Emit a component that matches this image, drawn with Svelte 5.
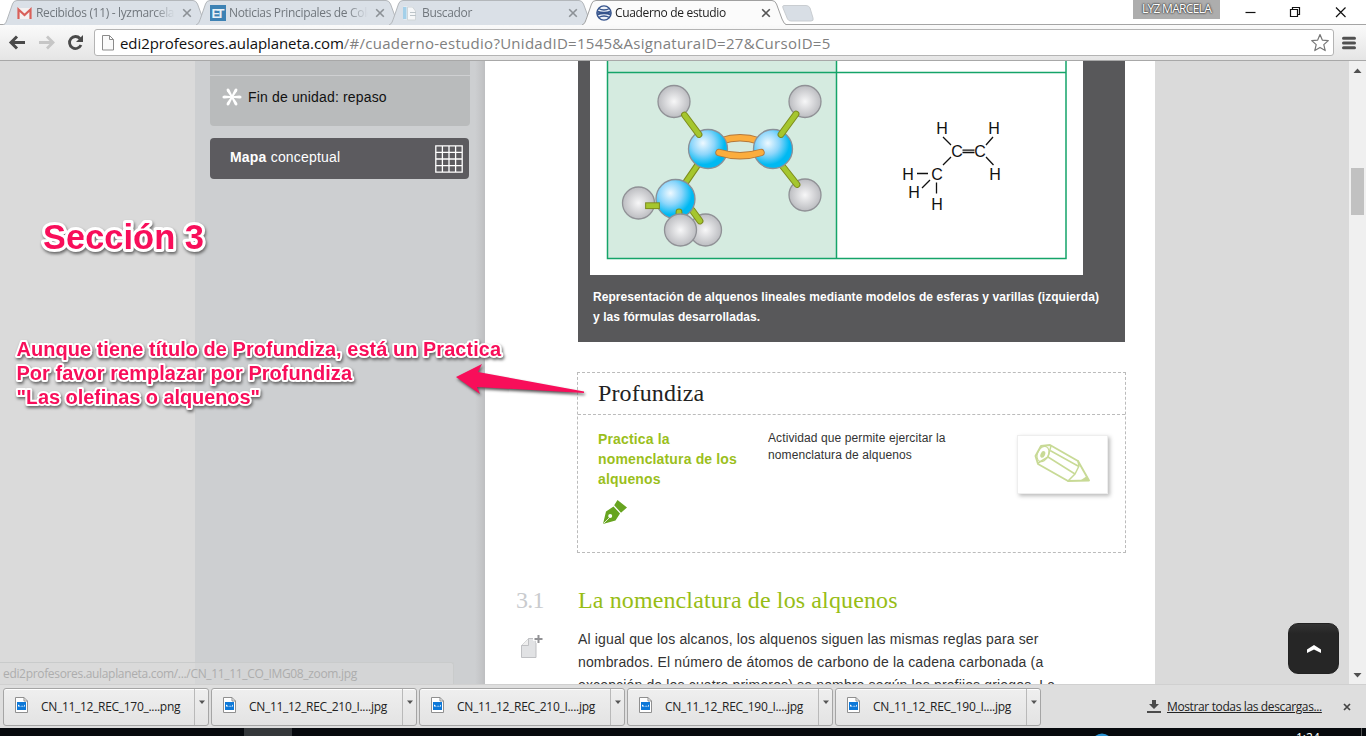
<script>
  const tabs = [
    { title: 'Recibidos (11) - lyzmarcela', icon: 'mail', active: false },
    { title: 'Noticias Principales de Colombia', icon: 'et', active: false },
    { title: 'Buscador', icon: 'docs', active: false },
    { title: 'Cuaderno de estudio', icon: 'globe', active: true }
  ];
  const downloads = [
    'CN_11_12_REC_170_....png',
    'CN_11_12_REC_210_I....jpg',
    'CN_11_12_REC_210_I....jpg',
    'CN_11_12_REC_190_I....jpg',
    'CN_11_12_REC_190_I....jpg'
  ];
  const formula = [
    ['H', 942, 133.5], ['H', 994, 133.5], ['C', 957, 156.5], ['C', 980, 156.5], ['H', 995, 179.5],
    ['C', 937, 179.5], ['H', 908, 179.5], ['H', 914, 198], ['H', 937, 209.5]
  ];
</script>

<div class="window">
  <header class="tabstrip">
    <div class="tabs">
      {#each tabs as tab}
        <div class="tab" class:active={tab.active}>
          <svg class="shape" width="206" height="25" viewBox="0 0 206 25">
            <path d="M0 25 C3 24 3.500 21 5 17 L9.500 4 Q10.500 .5 14 .5 H190 Q193 .5 194.500 4 L200 19 Q202 24.500 205 25" />
          </svg>
          <span class="favicon">
            {#if tab.icon === 'mail'}
              <svg width="16" height="16" viewBox="0 0 16 16"><rect x="1" y="3" width="13" height="11" fill="#f4f1f1" /><path d="M1.500 14V4.500L7.500 10l6-5.500V14" fill="none" stroke="#d9605a" stroke-width="2.200" /></svg>
            {:else if tab.icon === 'et'}
              <svg width="16" height="16" viewBox="0 0 16 16"><rect width="16" height="16" fill="#3d82b4" /><text x="1.500" y="13" font-size="13" textLength="13" font-family="Liberation Sans" font-weight="bold" fill="#e8f1f7">ET</text></svg>
            {:else if tab.icon === 'docs'}
              <svg width="16" height="16" viewBox="0 0 16 16"><path d="M.5 1.500h9v13h-9z" fill="#eef4f8" /><path d="M0 2h3.500v12H0z" fill="#a4d0e9" /><path d="M4.500 2h5l3 4v9h-8z" fill="#f6f7f8" stroke="#d0d5d8" /><path d="M7 7.500h6M7 10.500h6" stroke="#bcc4c9" /></svg>
            {:else}
              <svg width="16" height="16" viewBox="0 0 16 16" fill="none" stroke="#35538c" stroke-width="1.300"><circle cx="8" cy="8" r="7.100" fill="#eef2f8" /><path d="M2.500 3.500q5.500 3 11 0M1 6q7 3 14 0M.8 8h14.400M1 10q7-3 14 0M2.500 12.500q5.500-3 11 0" /></svg>
            {/if}
          </span>
          <span class="title">{tab.title}</span>
          <svg class="close" width="10" height="10" viewBox="0 0 10 10"><path d="M1.200 1.200l7.600 7.600M8.800 1.200l-7.600 7.600" /></svg>
        </div>
      {/each}
      <svg class="newtab" width="34" height="18" viewBox="0 0 34 18"><path d="M3 .5H25Q28 .5 29 3L32 13Q33 16 30 16H10Q7.500 16 6.500 14L2 3Q1 .5 3 .5Z" fill="#d8dee5" stroke="#c9cdd1" /></svg>
    </div>
    <div class="controls">
      <span class="user">LYZ MARCELA</span>
      <svg width="110" height="24" viewBox="0 0 110 24" fill="none" stroke="#111" stroke-width="1.200">
        <path d="M.5 12.500h10" /><path d="M45.500 9.500h7v7h-7zM47.500 9.500v-2h7v7h-2" /><path d="M91 7.500l9.500 9.500M100.500 7.500l-9.500 9.500" />
      </svg>
    </div>
  </header>

  <nav class="toolbar">
    <svg class="nav" width="94" height="36" viewBox="0 25 94 36" fill="none">
      <path d="M25 42.500H11.500M17 36.500l-6 6 6 6" stroke="#4a4a4a" stroke-width="3" />
      <path d="M39 42.500h13M47 36.500l6 6-6 6" stroke="#c6c6c6" stroke-width="2.800" />
      <path d="M80 38.500a6 6 0 1 0 1 6.500" stroke="#4a4a4a" stroke-width="2.800" /><path d="M83 35v7h-7z" fill="#4a4a4a" />
    </svg>
    <div class="address">
      <svg width="14" height="18" viewBox="0 0 14 18"><path d="M1.500 1.500h7l4 4v10.500h-11zM8.500 1.500v4h4" fill="#fafafa" stroke="#8b8b8b" /></svg>
      <span class="url"><b>edi2profesores.aulaplaneta.com</b>/#/cuaderno-estudio?UnidadID=1545&AsignaturaID=27&CursoID=5</span>
      <svg class="star" width="20" height="20" viewBox="0 0 20 20"><path d="M10 1.500l2.300 5.600 6 .5-4.500 4 1.400 6-5.200-3.200-5.200 3.200 1.400-6-4.500-4 6-.5z" fill="#fff" stroke="#777" stroke-width="1.200" stroke-linejoin="round" /></svg>
    </div>
    <svg class="menu" width="14" height="14" viewBox="0 0 14 14"><path d="M1.500 2.300h11M1.500 7h11M1.500 11.700h11" stroke="#505050" stroke-width="3" stroke-linecap="round" /></svg>
  </nav>

  <main class="page">
    <div class="margin"></div>
    <aside class="sidebar">
      <div class="units">
        <div class="unit-prev"></div>
        <div class="unit">
          <svg width="20" height="20" viewBox="-10 -10 20 20" fill="#fff">
            {#each [30, 90, 150, 210, 270, 330] as angle}
              <path transform="rotate({angle})" d="M-.8 0L-1.500-7.500Q-1.500-9.600 0-9.600T1.500-7.500L.8 0Z" />
            {/each}
          </svg>
          <span>Fin de unidad: repaso</span>
        </div>
      </div>
      <div class="map">
        <span><b>Mapa</b> conceptual</span>
        <svg width="28" height="28" viewBox="0 0 28 28" fill="none" stroke="#fff" stroke-width="1.300"><path d="M.8.8h26.400v26.400H.8zM7.400 1v26M14 1v26M20.600 1v26M1 7.400h26M1 14h26M1 20.600h26" /></svg>
      </div>
    </aside>

    <article class="content">
      <figure>
        <svg class="molecule" width="493" height="214" viewBox="590 61 493 214">
          <defs>
            <radialGradient id="hydrogen"><stop offset="0" stop-color="#f7f7f8" /><stop offset="1" stop-color="#bcbdc1" /></radialGradient>
            <radialGradient id="carbon" cx=".37" cy=".35" r=".65"><stop offset="0" stop-color="#eef9ff" /><stop offset=".45" stop-color="#8dd6fb" /><stop offset=".85" stop-color="#00b9f2" /></radialGradient>
          </defs>
          <rect x="590" y="61" width="493" height="214" fill="#fff" />
          <rect x="607" y="61" width="230" height="198" fill="#d5ebe0" />
          <path d="M607.500 61V258.500H1066V61M836.500 61V258.500M607 72.500H1066" fill="none" stroke="#15a469" stroke-width="1.500" />
          <g class="h"><circle cx="674" cy="101.500" r="16" /><circle cx="805" cy="101.500" r="16" /><circle cx="805" cy="195" r="16" /><circle cx="638.500" cy="203" r="16" /><circle cx="705.500" cy="230" r="16" /></g>
          <path class="edge" d="M699 163L686 182" /><path class="bond" d="M699 163L686 182" />
          <path class="edge" d="M780 163L797 184.500" /><path class="bond" d="M780 163L797 184.500" />
          <path class="dbl-edge" d="M721 141Q740 134.500 759 141" /><path class="dbl" d="M721 141Q740 134.500 759 141" />
          <path class="edge" d="M692 210L700 221" /><path class="bond" d="M692 210L700 221" />
          <g class="c"><circle cx="708" cy="149" r="19.500" /><circle cx="773" cy="149" r="19.500" /><circle cx="675.500" cy="199" r="19.500" /></g>
          <path class="edge" d="M684.500 115L699 134.500" /><path class="bond" d="M684.500 115L699 134.500" />
          <path class="edge" d="M796 114L781 134.500" /><path class="bond" d="M796 114L781 134.500" />
          <path class="dbl-edge" d="M719 152.500Q740 159 761 152.500" /><path class="dbl" d="M719 152.500Q740 159 761 152.500" />
          <path class="edge flat" d="M648.500 205.700H656.500" /><path class="bond flat" d="M648.500 205.700H656.500" />
          <path class="edge" d="M679 212V217" /><path class="bond" d="M679 212V217" />
          <g class="h"><circle cx="680.500" cy="230" r="16" /></g>
          <path d="M943 137l8 8M993 137l-7 8M962.500 150.200h12M962.500 152.500h12M986 157l7.500 8M951 157l-8 8M917 173.500h11M930 180l-8 8M936.500 182.500v11" fill="none" stroke="#111" stroke-width="1.300" />
          {#each formula as [atom, x, y]}
            <text {x} {y} text-anchor="middle" class="atom">{atom}</text>
          {/each}
        </svg>
        <figcaption>Representación de alquenos lineales mediante modelos de esferas y varillas (izquierda)<br />y las fórmulas desarrolladas.</figcaption>
      </figure>

      <section class="activity">
        <h2>Profundiza</h2>
        <div class="row">
          <div class="name">
            <strong>Practica la nomenclatura de los alquenos</strong>
            <svg width="26" height="26" viewBox="0 0 26 26"><path d="M1 25L4 12.500L11.500 7.500L18 14.500L13.500 21.500ZM12.200 6.200L15.500 1L25 8.500L19 13.800Z" fill="#67a420" /><path d="M1.500 24.500l6-6" stroke="#fff" stroke-width=".8" /><circle cx="8.200" cy="17" r="2" fill="#fff" /></svg>
          </div>
          <p>Actividad que permite ejercitar la nomenclatura de alquenos</p>
          <div class="thumb">
            <svg width="60" height="42" viewBox="0 0 60 42" fill="none" stroke="#c8da96" stroke-width="1.900" stroke-linejoin="round" stroke-linecap="round"><path d="M8 2L17 1L45 17L56 36.500L35 37L5 20L2.500 12Z" /><ellipse cx="10" cy="10" rx="5.500" ry="8" transform="rotate(25 10 10)" stroke-width="1.200" /><ellipse cx="10" cy="10.500" rx="2.200" ry="3.500" transform="rotate(25 10 10)" fill="#c8da96" stroke="none" /><path d="M18 2L15 13L5 19M15 13L42 30M18 7L45 22M45 17L46 22L42 30L35 37" stroke-width="1.500" /><path d="M56 37l-8-1 6-4z" fill="#c8da96" stroke="none" /></svg>
          </div>
        </div>
      </section>

      <section class="chapter">
        <div class="chapter-side">
          <span>3.1</span>
          <svg width="25" height="25" viewBox="0 0 25 25"><path d="M8.500 4.500H16V23.500H1.500V11.500Z" fill="#e1e2e4" stroke="#bfc0c3" /><path d="M8.500 4.500V11.500H1.500" fill="#eee" stroke="#bfc0c3" /><path d="M18 .5V9M13 4.700H23" stroke="#fff" stroke-width="4" /><path d="M18.500 1V9M14.500 5H22.500" stroke="#929295" stroke-width="2" /></svg>
        </div>
        <div class="chapter-body">
          <h3>La nomenclatura de los alquenos</h3>
          <p>Al igual que los alcanos, los alquenos siguen las mismas reglas para ser<br />nombrados. El número de átomos de carbono de la cadena carbonada (a<br />excepción de los cuatro primeros) se nombra según los prefijos griegos. La</p>
        </div>
      </section>
    </article>
    <div class="rest"></div>
    <div class="scrollbar">
      <svg width="9" height="5" viewBox="0 0 9 5"><path d="M4.500 .5L8.500 5h-8z" fill="#505050" /></svg>
      <i></i>
      <svg width="9" height="5" viewBox="0 0 9 5"><path d="M4.500 4.500L8.500 0h-8z" fill="#505050" /></svg>
    </div>
    <div class="status">edi2profesores.aulaplaneta.com/.../CN_11_11_CO_IMG08_zoom.jpg</div>
    <button class="top" aria-label="Subir"><svg width="16" height="10" viewBox="0 0 16 10"><path d="M1 5.500L8 1L15 5.500V9L8 5.500L1 9Z" fill="#fff" /></svg></button>
  </main>

  <footer class="downloads">
    {#each downloads as file}
      <div class="download">
        <div class="file">
          <svg width="13" height="16" viewBox="0 0 13 16"><path d="M.5.5H9L12.500 4V15.500H.5Z" fill="#fff" stroke="#8f8f8f" /><path d="M9 .5V4H12.500" fill="none" stroke="#8f8f8f" /><rect x="2" y="5" width="9" height="8" fill="#0d78d8" /><path d="M3 9.500V7.500l1.500 1 1 1.500 1.500-1.500 1.500 1L10 7.500v2z" fill="#fff" /></svg>
          <span>{file}</span>
        </div>
        <div class="more"><svg width="6" height="4" viewBox="0 0 6 4"><path d="M0 .5h6L3 4z" fill="#555" /></svg></div>
      </div>
    {/each}
    <div class="all">
      <svg width="14" height="13" viewBox="0 0 14 13"><path d="M5 0h4v4h3L7 9 2 4h3zM0 11h14v2H0z" fill="#4b4b4b" /></svg>
      <span class="link">Mostrar todas las descargas...</span>
      <svg class="dismiss" width="8" height="8" viewBox="0 0 8 8"><path d="M1 1l6 6M7 1L1 7" stroke="#444" stroke-width="1.700" /></svg>
    </div>
  </footer>
  <div class="taskbar">
    <span class="slot"></span>
    <svg width="22" height="8" viewBox="0 0 22 8"><circle cx="11" cy="16" r="10.500" fill="#2b93d3" /></svg>
    <span class="clock">1:24</span>
    <span class="peek"></span>
  </div>

  <svg class="notes" width="620" height="220" viewBox="0 205 620 220">
    <g class="marker">
      <text x="43" y="249" font-size="34.500" textLength="161">Sección 3</text>
      <text x="16.500" y="356" font-size="20" textLength="484.500">Aunque tiene título de Profundiza, está un Practica</text>
      <text x="16.500" y="380" font-size="20" textLength="335.500">Por favor remplazar por Profundiza</text>
      <text x="16.500" y="404" font-size="20" textLength="243.500">"Las olefinas o alquenos"</text>
    </g>
    <path class="arrow" d="M456 377L482 364L478 372L584 391.500L584 393L477 387L480 394Z" />
  </svg>
</div>

<style>
  :global(body) { margin: 0; overflow: hidden; }
  .window { position: relative; width: 1366px; height: 736px; overflow: hidden; display: flex; flex-direction: column; background: #fff; font-family: 'Liberation Sans', Arial, sans-serif; color: #333; }
  svg { display: block; flex: none; }
  .window, .window :global(*) { box-sizing: border-box; }

  .tabstrip { height: 25px; flex: none; display: flex; justify-content: space-between; border-bottom: 1px solid #a5a5a5; }
  .tabs { display: flex; padding-left: 3px; font: 12px 'Open Sans', sans-serif; }
  .tab { position: relative; width: 193px; height: 25px; display: flex; align-items: center; padding: 0 0 0 14px; color: #71777d; }
  .tab.active { color: #222; z-index: 2; }
  .shape { position: absolute; left: 0; top: 0; fill: #dae0e7; stroke: #b3b7bb; }
  .active .shape { fill: #fbfbfb; stroke: #a0a0a0; }
  .favicon { position: relative; width: 19px; }
  .title { position: relative; width: 141px; overflow: hidden; white-space: nowrap; letter-spacing: -.33px; line-height: 20px; mask-image: linear-gradient(90deg, #000 118px, transparent 139px); }
  .close { position: relative; margin-left: 5px; fill: none; stroke: #8c9196; stroke-width: 1.600; }
  .active .close { stroke: #555; }
  .newtab { margin: 5px 0 0 6px; }
  .controls { display: flex; padding-right: 11px; gap: 25px; }
  .user { height: 19px; width: 87px; background: #adadad; text-align: center; font: 12px/18px 'Open Sans', sans-serif; letter-spacing: -.7px; color: #fff; text-shadow: 0 0 2px #333, 0 0 2px #444, 0 0 1px #555; }

  .toolbar { height: 36px; flex: none; display: flex; align-items: center; background: linear-gradient(#fafafa, #e5e5e5); border-bottom: 1px solid #a8a8a8; }
  .address { width: 1240px; height: 27px; display: flex; align-items: center; padding: 0 3px 0 6px; background: #fff; border: 1px solid #b4b4b4; border-radius: 3px; }
  .url { flex: 1; padding-left: 5px; font: 15px/24px 'Open Sans', sans-serif; letter-spacing: .28px; white-space: nowrap; color: #808080; }
  .url b { font-weight: 400; color: #111; letter-spacing: -.07px; }
  .menu { margin-left: 8px; }

  .page { position: relative; height: 623px; flex: none; display: flex; overflow: hidden; }
  .margin { width: 195px; background: #dadada; }
  .sidebar { width: 290px; padding: 0 15px; background: linear-gradient(90deg, #cdcfd1 280px, #c3c4c6 287px, #bdbec0); }
  .units { height: 65px; background: #b9bbbc; border-radius: 0 0 4px 4px; }
  .unit-prev { height: 15px; border-bottom: 1px solid #cfd0d2; }
  .unit { display: flex; align-items: center; height: 42px; padding-left: 12px; gap: 6px; font-size: 14px; letter-spacing: .16px; color: #111; }
  .map { width: 259px; height: 41px; margin-top: 12px; display: flex; align-items: center; justify-content: space-between; padding: 0 6px 0 20px; background: #5c5b5f; border-radius: 4px; color: #fff; font-size: 14px; letter-spacing: .2px; }
  .map span { padding-bottom: 3px; }
  .content { width: 670px; padding: 0 29px 0 31px; background: #fff; }
  figure { margin: 0 1px 0 62px; width: 547px; height: 281px; padding-left: 12px; background: #58585a; }
  figcaption { padding: 12px 0 0 3px; font: bold 12px/20px 'Liberation Sans', Arial, sans-serif; letter-spacing: .06px; color: #fff; white-space: nowrap; }
  .h circle { fill: url(#hydrogen); stroke: #909196; stroke-width: 1.300; }
  .c circle { fill: url(#carbon); stroke: #8a9098; stroke-width: 1.300; }
  .edge, .bond, .dbl, .dbl-edge { fill: none; stroke-linecap: round; }
  .edge { stroke: #7d8c1d; stroke-width: 6.800; }
  .bond { stroke: #a5c62e; stroke-width: 4.800; }
  .flat { stroke-linecap: square; }
  .dbl-edge { stroke: #b5783a; stroke-width: 7.400; }
  .dbl { stroke: #fbad3e; stroke-width: 5.600; }
  .atom { font: 16px 'Liberation Sans', Arial, sans-serif; fill: #111; }

  .activity { margin: 30px 0 0 61px; width: 549px; height: 181px; border: 1px dashed #bbb; }
  h2 { margin: 0; height: 42px; padding-left: 20px; border-bottom: 1px dashed #bbb; font: 24px/41px 'Liberation Serif', serif; letter-spacing: .1px; color: #222; }
  .row { display: flex; padding: 14px 17px 0 20px; }
  .name { width: 170px; font-size: 14px; line-height: 20px; letter-spacing: .15px; color: #9bbf1c; }
  .name strong { display: block; width: 150px; }
  .name svg { margin: 10px 0 0 4px; }
  .row p { width: 210px; margin: 1px 0 0; font-size: 12px; line-height: 17px; letter-spacing: .1px; color: #333; }
  .thumb { width: 91px; height: 59px; margin: 6px 0 0 39px; padding: 8px 0 0 15px; background: #fff; border: 1px solid #eee; box-shadow: 2px 2px 4px #bbb; }

  .chapter { display: flex; margin-top: 32px; }
  .chapter-side { width: 62px; flex: none; font: 24px/31px 'Liberation Serif', serif; letter-spacing: -.8px; color: #c9cbce; }
  .chapter-side svg { margin: 18px 0 0 4px; }
  .chapter-side span { display: block; }
  h3 { margin: 0; font: 24px/31px 'Liberation Serif', serif; letter-spacing: .12px; color: #97bd15; white-space: nowrap; }
  .chapter-body p { margin: 12px 0 0; font-size: 14px; line-height: 23px; letter-spacing: .15px; white-space: nowrap; color: #333; }
  .rest { width: 194px; background: #dadada; }
  .scrollbar { width: 17px; display: flex; flex-direction: column; align-items: center; padding: 7px 0 6px; background: #f0f0f0; }
  .scrollbar i { width: 13px; height: 47px; margin: 95px 0 auto; background: #c1c1c1; }
  .status { position: absolute; left: 0; bottom: 0; width: 454px; height: 22px; padding-left: 3px; background: rgba(218, 219, 219, .55); border: 1px solid #c9cbcb; border-width: 1px 1px 0 0; border-radius: 0 3px 0 0; font: 12px/22px 'Open Sans', sans-serif; letter-spacing: -.33px; color: #adadad; white-space: nowrap; }
  .top { position: absolute; left: 1288px; top: 562px; width: 51px; height: 51px; display: flex; align-items: center; justify-content: center; padding: 0; border: 1px solid #222; border-radius: 10px; background: linear-gradient(#333, #262626 20%); }

  .downloads { height: 44px; flex: none; display: flex; align-items: center; gap: 2px; padding-left: 3px; background: #dedede; border-top: 1px solid #d0d0d0; }
  .download { width: 206px; height: 38px; display: flex; background: linear-gradient(#efefef, #e3e3e3); border: 1px solid #a5a5a5; border-radius: 3px; box-shadow: inset 0 1px #fff; }
  .file { width: 191px; display: flex; align-items: center; padding-left: 11px; font: 12px 'Open Sans', sans-serif; letter-spacing: -.3px; color: #222; border-right: 1px solid #b9b9b9; white-space: nowrap; }
  .file svg { margin: -3px 13px 0 0; }
  .more { flex: 1; padding: 11px 0 0 4px; }
  .all { margin-left: auto; display: flex; align-items: center; padding-right: 15px; font: 12px 'Open Sans', sans-serif; letter-spacing: -.37px; color: #222; }
  .link { margin-left: 6px; width: 155px; white-space: nowrap; text-decoration: underline; }
  .dismiss { margin-left: 21px; }
  .taskbar { height: 8px; flex: none; display: flex; background: #06090d; overflow: hidden; }
  .slot { width: 48px; margin: 0 799px 0 244px; background: #34373a; }
  .clock { margin-left: 183px; width: 63px; padding-top: 2px; font: 12px/16px 'Open Sans', sans-serif; color: #fff; }
  .peek { width: 1px; margin-left: 2px; background: #555; }

  .notes { position: absolute; left: 0; top: 205px; pointer-events: none; }
  .marker { filter: drop-shadow(1px 2px 1.500px #666); }
  .marker text { font-family: 'Liberation Sans', Arial, sans-serif; font-weight: bold; fill: #f80e5a; stroke: #fff; stroke-width: 4; stroke-linejoin: round; paint-order: stroke; }
  .marker text:first-child { stroke-width: 6; }
  .arrow { fill: #f80e5a; filter: drop-shadow(1px 2px 1.500px #555); }
</style>
